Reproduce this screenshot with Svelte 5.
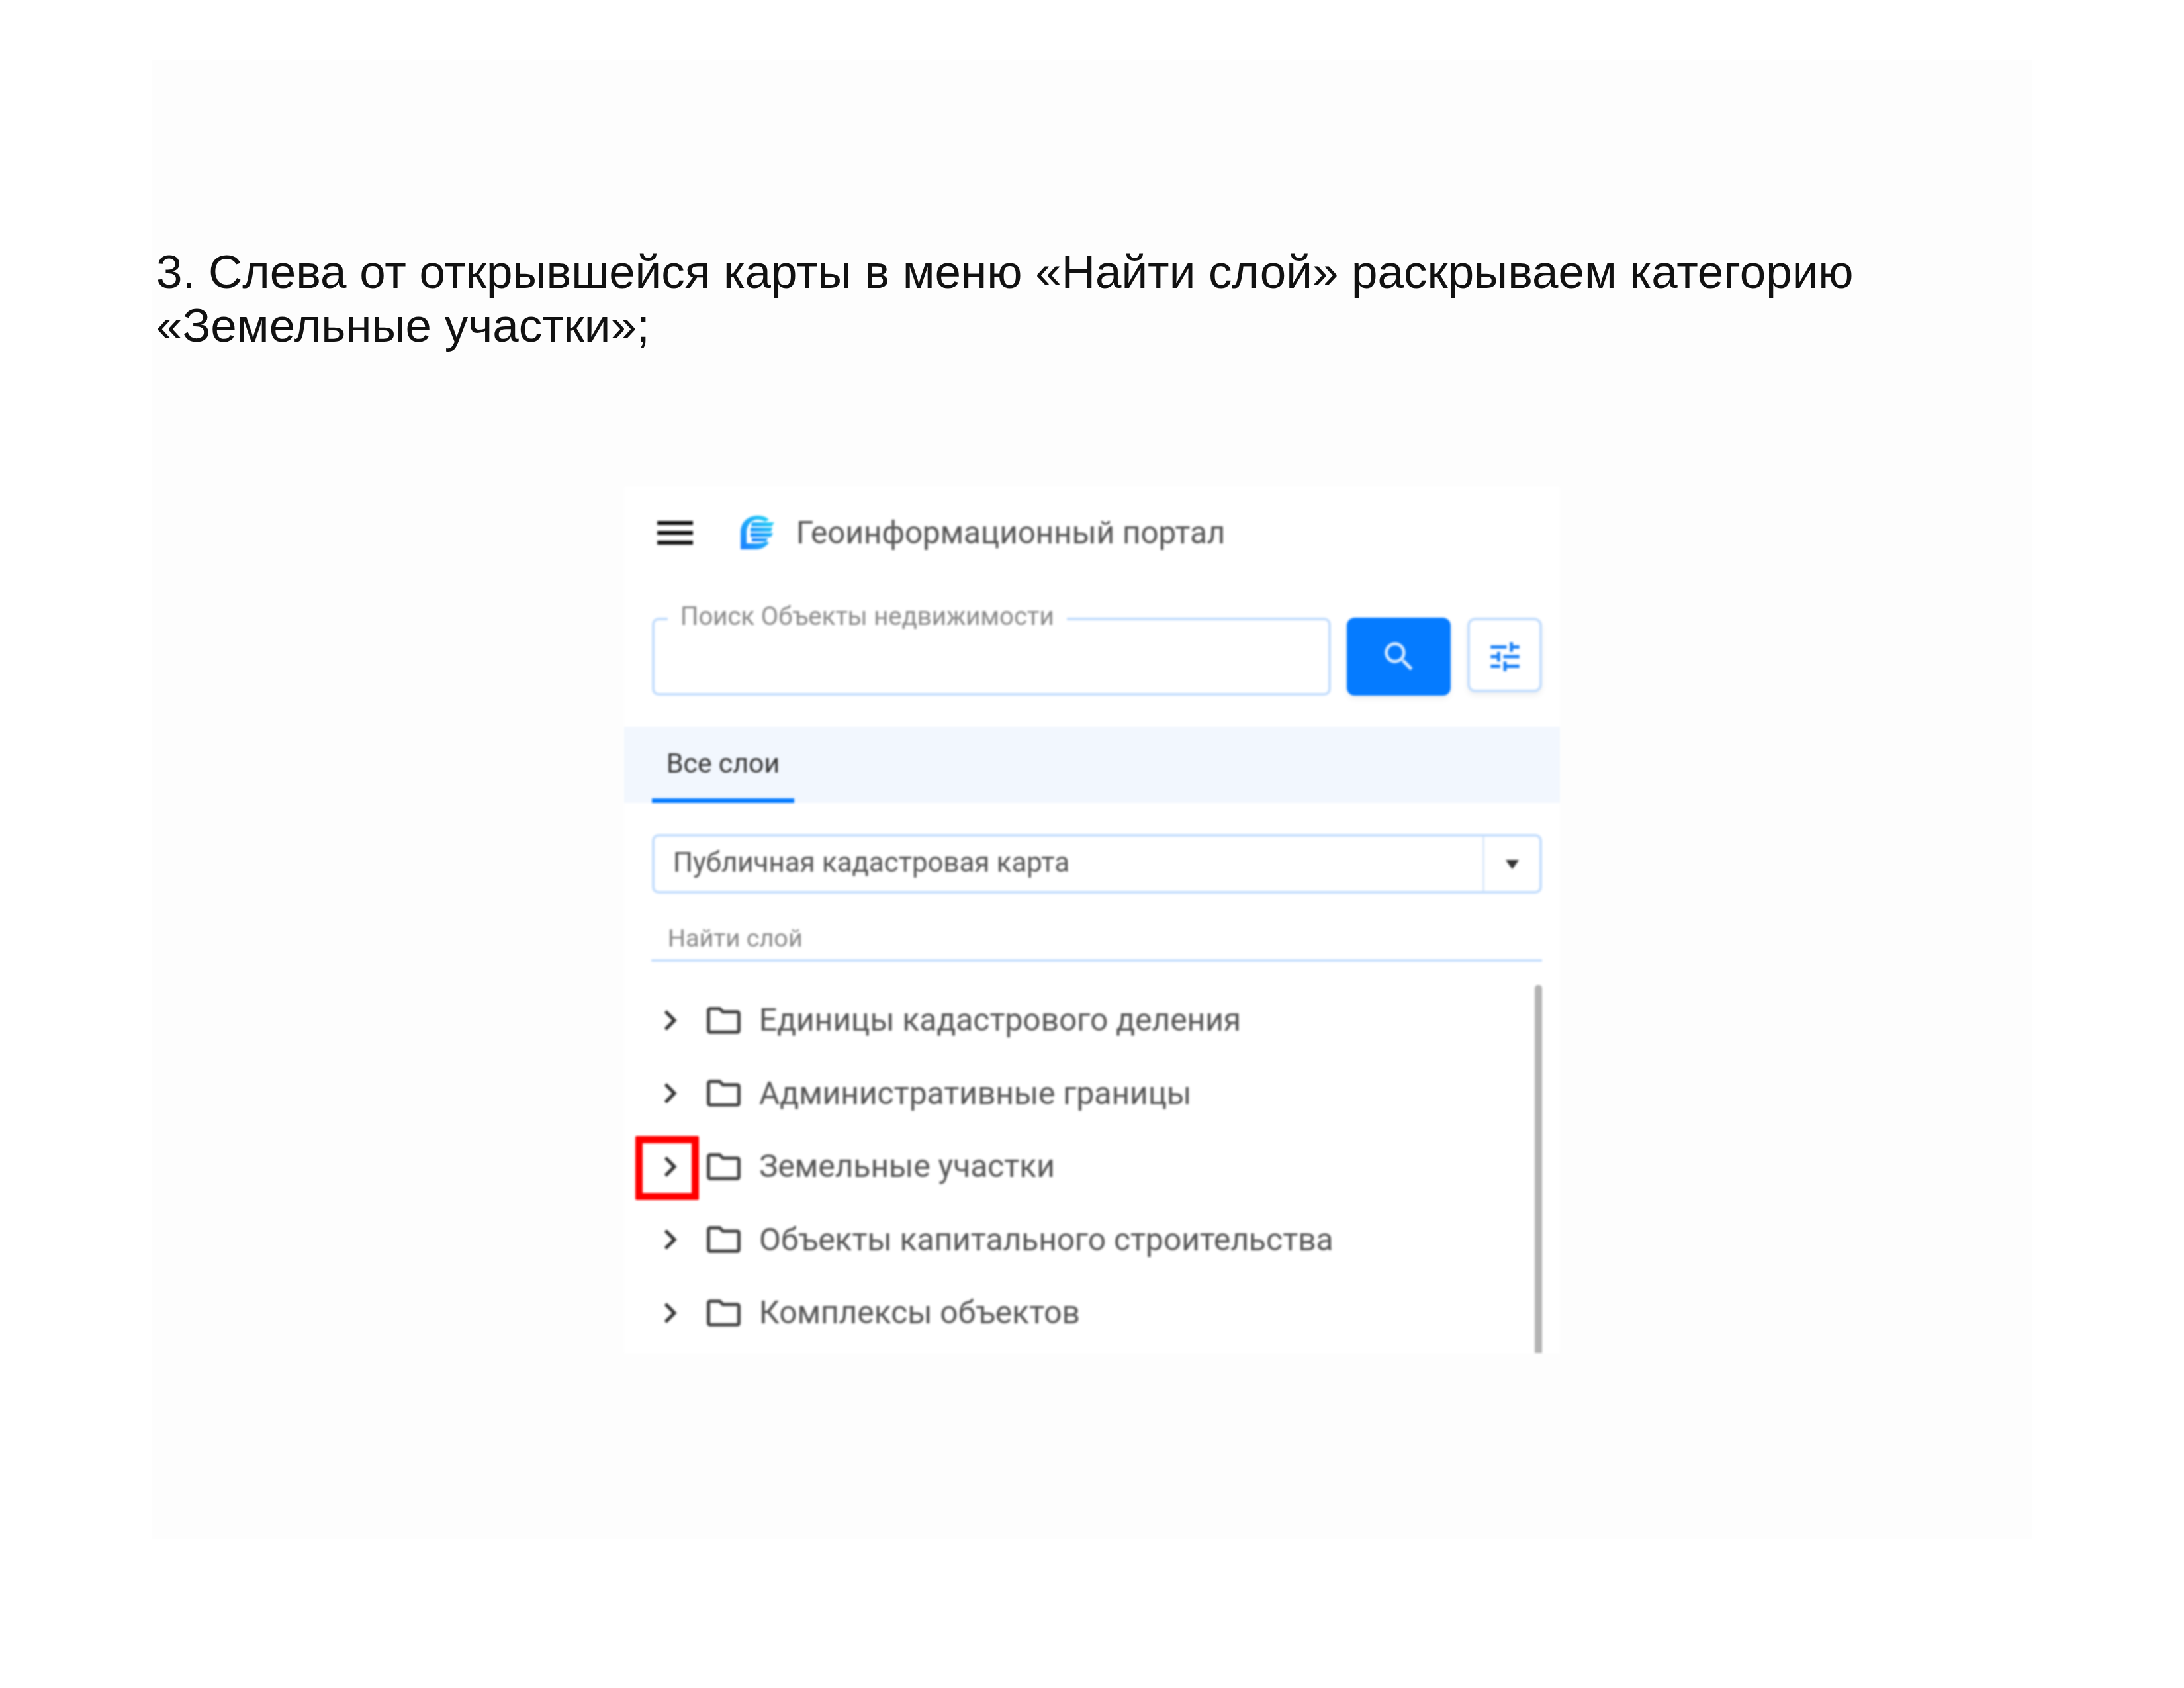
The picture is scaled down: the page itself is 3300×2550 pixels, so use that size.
<script>
  const layers = [
    "Единицы кадастрового деления",
    "Административные границы",
    "Земельные участки",
    "Объекты капитального строительства",
    "Комплексы объектов",
  ];
  const marked = 2;
</script>

<div class="slide">
  <p class="lead">3. Слева от открывшейся карты в меню «Найти слой» раскрываем категорию<br />«Земельные участки»;</p>

  <div class="panel">
    <div class="header">
      <svg class="menu" viewBox="0 0 24 24"><path d="M3 18h18v-2H3v2zm0-5h18v-2H3v2zm0-7v2h18V6H3z" /></svg>
      <svg class="logo" viewBox="0 0 54 54">
        <defs>
          <linearGradient id="logo-grad" x1="0" y1="1" x2="1" y2="0">
            <stop offset="0" stop-color="#1a7dff" />
            <stop offset="1" stop-color="#22d3f5" />
          </linearGradient>
        </defs>
        <path d="M1 52V26C1 11 12 1 27 1c7 0 13 2 17 6l-6 3c-3-2-7-3-11-3C17 7 10 15 10 26v17h16c5 0 10-1 14-3l4 2c-5 6-11 10-19 10z" fill="url(#logo-grad)" />
        <path d="M18 11h34l-4 6H17zM16 19h33l-2 6H16zM16 27h34l-3 6H16zM18 35h25l-4 5H18z" fill="url(#logo-grad)" />
      </svg>
      <span class="title">Геоинформационный портал</span>
    </div>

    <div class="search-row">
      <div class="search-box">
        <span class="search-label">Поиск Объекты недвижимости</span>
      </div>
      <button class="btn-search" aria-label="Поиск">
        <svg viewBox="0 0 24 24"><path d="M15.5 14h-.79l-.28-.27C15.41 12.59 16 11.11 16 9.5 16 5.91 13.09 3 9.5 3S3 5.91 3 9.5 5.91 16 9.5 16c1.61 0 3.09-.59 4.23-1.57l.27.28v.79l5 4.99L20.49 19l-4.99-5zm-6 0C7.01 14 5 11.99 5 9.5S7.01 5 9.5 5 14 7.01 14 9.5 11.99 14 9.5 14z" /></svg>
      </button>
      <button class="btn-tune" aria-label="Фильтр">
        <svg viewBox="0 0 24 24"><path d="M3 17v2h6v-2H3zM3 5v2h10V5H3zm10 16v-2h8v-2h-8v-2h-2v6h2zM7 9v2H3v2h4v2h2V9H7zm14 4v-2H11v2h10zm-6-4h2V7h4V5h-4V3h-2v6z" /></svg>
      </button>
    </div>

    <div class="tabs">
      <div class="tab">Все слои</div>
    </div>

    <div class="select">
      <span class="select-text">Публичная кадастровая карта</span>
      <span class="select-arrow"><i></i></span>
    </div>

    <div class="find">Найти слой</div>

    <div class="tree">
      <div class="rows">
        {#each layers as name, i}
          <div class="row">
            {#if i === marked}<span class="mark"></span>{/if}
            <svg class="chevron" viewBox="0 0 24 24"><path d="M8.59 16.59L13.17 12 8.59 7.41 10 6l6 6-6 6z" /></svg>
            <svg class="folder" viewBox="0 0 24 24"><path d="M10 4H4c-1.1 0-1.99.9-1.99 2L2 18c0 1.1.9 2 2 2h16c1.1 0 2-.9 2-2V8c0-1.1-.9-2-2-2h-8l-2-2zm10 14H4V6h5.17l2 2H20v10z" /></svg>
            <span class="name">{name}</span>
          </div>
        {/each}
      </div>
      <div class="scrollbar"></div>
    </div>
  </div>
</div>

<style>
  :global(body) {
    background: #fff;
  }

  .slide {
    box-sizing: border-box;
    width: 2840px;
    height: 2235px;
    margin: 90px 0 0 230px;
    padding-top: 280px;
    background: #fdfdfd;
    overflow: hidden;
  }

  .lead {
    margin: 0 0 0 6px;
    font-family: "Liberation Sans", sans-serif;
    font-size: 71px;
    line-height: 81px;
    color: #111;
    white-space: nowrap;
  }

  .panel {
    box-sizing: border-box;
    width: 1414px;
    height: 1310px;
    margin: 203px 0 0 713px;
    background: #fff;
    font-family: Roboto, sans-serif;
    filter: blur(1.4px);
  }

  .header {
    display: flex;
    align-items: center;
    height: 140px;
    padding-left: 41px;
  }

  .menu {
    width: 72px;
    height: 72px;
    fill: #111;
  }

  .logo {
    width: 54px;
    height: 54px;
    margin-left: 62px;
  }

  .title {
    margin-left: 31px;
    font-size: 47.6px;
    color: #555;
    white-space: nowrap;
  }

  .search-row {
    display: flex;
    align-items: flex-start;
    margin-top: 58px;
    padding: 0 27px 0 42px;
  }

  .search-box {
    position: relative;
    box-sizing: border-box;
    width: 1026px;
    height: 118px;
    border: 4px solid #c4defd;
    border-radius: 10px;
  }

  .search-label {
    position: absolute;
    left: 20px;
    top: -27px;
    padding: 0 19px;
    background: #fff;
    font-size: 38.4px;
    line-height: 42px;
    color: #8a8a8a;
    white-space: nowrap;
  }

  .btn-search,
  .btn-tune {
    display: flex;
    align-items: center;
    justify-content: center;
    box-sizing: border-box;
    padding: 0;
    border-radius: 12px;
    box-shadow: 0 5px 10px rgba(0, 0, 0, 0.06);
  }

  .btn-search {
    width: 157px;
    height: 118px;
    margin-left: 24px;
    border: none;
    background: #057bff;
  }

  .btn-search svg {
    width: 58px;
    height: 58px;
    fill: #d8ebff;
  }

  .btn-tune {
    width: 113px;
    height: 113px;
    margin-left: 25px;
    padding-top: 5px;
    border: 4px solid #c4defd;
    background: #fff;
  }

  .btn-tune svg {
    width: 58px;
    height: 58px;
    fill: #1a80f5;
  }

  .tabs {
    height: 115px;
    margin-top: 47px;
    padding-left: 42px;
    background: #f2f7fe;
  }

  .tab {
    box-sizing: border-box;
    width: 215px;
    height: 115px;
    padding-top: 31px;
    border-bottom: 7px solid #057bff;
    font-size: 41px;
    line-height: 48px;
    text-align: center;
    color: #333;
  }

  .select {
    display: flex;
    box-sizing: border-box;
    height: 90px;
    margin: 47px 27px 0 42px;
    border: 4px solid #c4defd;
    border-radius: 10px;
  }

  .select-text {
    flex: 1;
    padding-left: 28px;
    font-size: 42px;
    line-height: 78px;
    color: #555;
  }

  .select-arrow {
    display: flex;
    align-items: center;
    justify-content: center;
    width: 83px;
    border-left: 3px solid #dbe9fa;
  }

  .select-arrow i {
    width: 0;
    height: 0;
    margin-top: 2px;
    border-left: 10px solid transparent;
    border-right: 10px solid transparent;
    border-top: 14px solid #333;
  }

  .find {
    box-sizing: border-box;
    height: 68px;
    margin: 35px 27px 0 41px;
    padding: 11px 0 0 25px;
    border-bottom: 4px solid #c4defd;
    font-size: 37.8px;
    line-height: 42px;
    color: #888;
  }

  .tree {
    display: flex;
    height: 591px;
    padding: 0 27px 0 39px;
  }

  .rows {
    flex: 1;
    padding-top: 33px;
  }

  .row {
    position: relative;
    display: flex;
    align-items: center;
    height: 110.5px;
  }

  .mark {
    position: absolute;
    left: -22px;
    top: 9px;
    box-sizing: border-box;
    width: 96px;
    height: 97px;
    border: 11px solid #f00;
    border-radius: 2px;
  }

  .chevron {
    flex: none;
    width: 61px;
    height: 61px;
    fill: #333;
  }

  .folder {
    flex: none;
    width: 61px;
    height: 61px;
    margin-left: 20px;
    fill: #444;
  }

  .name {
    margin-left: 23px;
    font-size: 47.9px;
    color: #555;
    white-space: nowrap;
  }

  .scrollbar {
    flex: none;
    width: 11px;
    margin-top: 35px;
    background: #b3b3b3;
    border-radius: 5px 5px 0 0;
  }
</style>
